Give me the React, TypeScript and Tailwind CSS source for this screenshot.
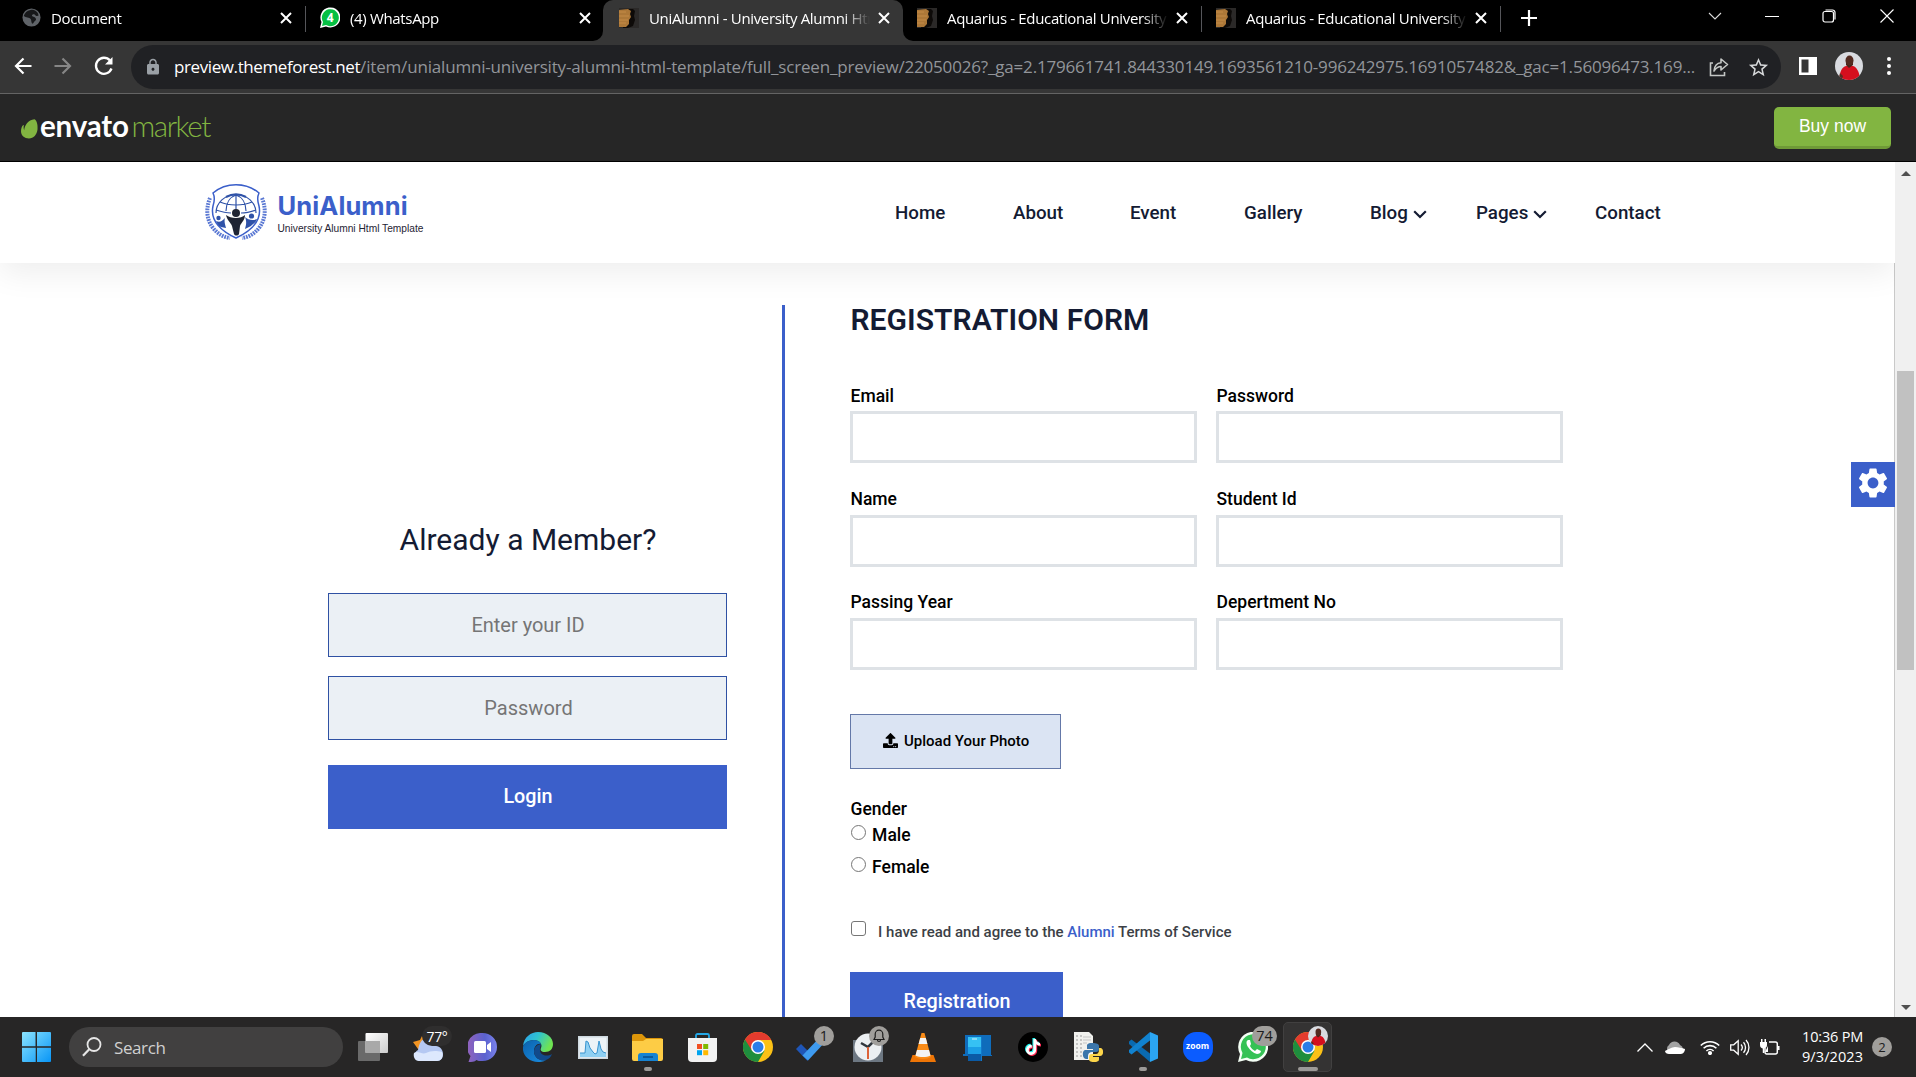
import type { ReactNode } from "react";
import { FaUpload, FaTiktok } from "react-icons/fa";
import { MdSettings, MdLock, MdStarBorder } from "react-icons/md";

const ui = "font-['Open_Sans','Noto_Sans',sans-serif]";

function CloseX() {
  return (
    <svg width="12" height="12" viewBox="0 0 12 12" className="shrink-0" stroke="#fff" strokeWidth="2">
      <path d="M1 1 11 11M11 1 1 11" />
    </svg>
  );
}

function ForestIcon() {
  return (
    <svg width="20" height="20" viewBox="0 0 20 20" className="shrink-0">
      <rect width="20" height="20" fill="#2b2928" />
      <path d="M7 1h7l2 2-1 5 1 4-2 6-5 2H4z" fill="#0d0a08" />
      <path d="M0 2l9-1 3 2-1 3 1 3-2 3v4l-3 3H0z" fill="#ad7838" />
      <path d="M0 4h7M0 8h10M0 12h9M0 15h7" stroke="#c48b46" strokeWidth="1" />
    </svg>
  );
}

function GlobeIcon() {
  return (
    <svg width="19" height="19" viewBox="0 0 20 20" className="shrink-0">
      <circle cx="10" cy="10" r="9.5" fill="#5f6368" />
      <path d="M9 2c4-1 8 2 8.500 6-2 1-3 0-4-1s-3-.5-3 1 3 1 4 3-1 2-2 4-2 2-2.500 0 0-3-1.500-4S2 10 2 8c1-3 3-5.500 7-6z" fill="#17181a" />
    </svg>
  );
}

function WhatsTabIcon() {
  return (
    <svg width="20" height="21" viewBox="0 0 20 21" className="shrink-0">
      <path d="M0 21 1.500 15A10 10 0 1 1 6 19.400z" fill="#fff" />
      <path d="M2 19 3 15A8.500 8.500 0 1 1 6 18z" fill="#06c043" />
      <text x="10.200" y="14.800" textAnchor="middle" fontSize="12" fontWeight="700" fill="#fff" fontFamily="Open Sans">4</text>
    </svg>
  );
}

function Tab({ icon, title, left, wide, iconWidth }: { icon: ReactNode; title: string; left: string; wide?: string; iconWidth?: string }) {
  return (
    <div className={`flex h-[35px] items-center ${left} ${wide ?? "w-[300px]"}`}>
      <span className={`flex shrink-0 items-center ${iconWidth ?? "w-[30px]"}`}>{icon}</span>
      <span className="w-[221px] shrink-0 overflow-hidden whitespace-nowrap text-[15px] leading-5 tracking-[-0.34px] text-white [mask-image:linear-gradient(to_right,#000_195px,transparent_221px)]">
        {title}
      </span>
      <span className="ml-[8px] flex pt-px"><CloseX /></span>
    </div>
  );
}

function TabBar() {
  return (
    <div className="flex h-[41px] bg-[#363636]">
      <div className="flex h-full w-[603px] rounded-br-[10px] bg-black">
        <Tab icon={<GlobeIcon />} title="Document" left="pl-[22px]" wide="w-[305px]" iconWidth="w-[29px]" />
        <span className="mt-[6px] h-[26px] w-px bg-[#55565a]" />
        <Tab icon={<WhatsTabIcon />} title="(4) WhatsApp" left="pl-[14px]" wide="w-[297px]" />
      </div>
      <div className="h-full w-[300px] bg-black">
        <div className="h-full w-full rounded-t-[10px] bg-[#363636]">
          <Tab icon={<ForestIcon />} title="UniAlumni - University Alumni Html" left="pl-[16px]" />
        </div>
      </div>
      <div className="flex h-full flex-1 rounded-bl-[10px] bg-black">
        <Tab icon={<ForestIcon />} title="Aquarius - Educational University" left="pl-[14px]" wide="w-[298px]" />
        <span className="mt-[6px] h-[26px] w-px bg-[#55565a]" />
        <Tab icon={<ForestIcon />} title="Aquarius - Educational University" left="pl-[14px]" wide="w-[298px]" />
        <span className="mt-[6px] h-[26px] w-px bg-[#55565a]" />
        <svg width="16" height="16" viewBox="0 0 16 16" className="ml-[20px] mt-[10px]" stroke="#fff" strokeWidth="2.200">
          <path d="M8 0v16M0 8h16" />
        </svg>
        <div className="ml-auto flex h-[32px] items-center pr-[22px]">
          <svg width="14" height="14" viewBox="0 0 14 14" className="mr-[43px]" fill="none" stroke="#ddd" strokeWidth="1.100"><path d="M1 4l6 6 6-6" /></svg>
          <svg width="14" height="14" viewBox="0 0 14 14" className="mr-[43px]" stroke="#fff"><path d="M0 7.500h14" /></svg>
          <svg width="14" height="14" viewBox="0 0 14 14" className="mr-[44px]" fill="none" stroke="#fff" strokeWidth="1.200"><rect x="1" y="2.500" width="10.500" height="10.500" rx="2" /><path d="M3.500 1h7a2.500 2.500 0 0 1 2.500 2.500v7" /></svg>
          <svg width="14" height="14" viewBox="0 0 14 14" stroke="#fff" strokeWidth="1.100"><path d="M.5.5l13 13M13.500.5l-13 13" /></svg>
        </div>
      </div>
    </div>
  );
}

function Avatar({ size }: { size: number }) {
  return (
    <svg width={size} height={size} viewBox="0 0 28 28" className="rounded-full">
      <rect width="28" height="28" fill="#d9dbe0" />
      <path d="M5 28c-1-8 2-13 6-14h7c4 1 6 6 7 12l-4 2z" fill="#d50f1e" />
      <path d="M11 13l3 3 4-3v-3h-7z" fill="#4a2319" />
      <ellipse cx="14.500" cy="8.500" rx="4" ry="5" fill="#532a20" />
      <path d="M5 21l3 3-1 3-3-2z" fill="#5b2c20" />
    </svg>
  );
}

function Toolbar() {
  return (
    <div className="flex h-[53px] items-center border-b border-[#646464] bg-[#363636]">
      <svg width="18" height="18" viewBox="0 0 18 18" className="ml-[14px] mt-[-2px]" fill="none" stroke="#fff" strokeWidth="2.200"><path d="M17.500 9H2M9.500 1.500 2 9l7.500 7.500" /></svg>
      <svg width="18" height="18" viewBox="0 0 18 18" className="ml-[22px] mt-[-2px]" fill="none" stroke="#868686" strokeWidth="2.200"><path d="M.5 9H16M8.500 1.500 16 9l-7.500 7.500" /></svg>
      <svg width="20" height="20" viewBox="0 0 20 20" className="ml-[22px] mt-[-2px]" fill="none" stroke="#fff" strokeWidth="2.300"><path d="M17.500 12.500A8 8 0 1 1 16 4.500" /><path d="M18.500 1v7.500H11z" fill="#fff" stroke="none" /></svg>
      <div className="ml-[17px] flex h-[44px] w-[1650px] items-center rounded-full bg-[#202124] pl-[13px]">
        <MdLock size={18} color="#9aa0a6" />
        <div className="ml-[12px] w-[1527px] whitespace-nowrap pb-px text-[17px] leading-6">
          <span className="tracking-[-0.4px] text-white">preview.themeforest.net</span>
          <span className="tracking-[-0.175px] text-[#92959a]">
            /item/unialumni-university-alumni-html-template/full_screen_preview/22050026?_ga=2.179661741.844330149.1693561210-996242975.1691057482&amp;_gac=1.56096473.169...
          </span>
        </div>
        <svg width="20" height="20" viewBox="0 0 20 20" className="ml-[8px] shrink-0" fill="none" stroke="#c4c7c5" strokeWidth="1.600">
          <path d="M4 6H1.500v12.500h14V15" />
          <path d="M5 14c.5-5 3-8 7-8.200V2l6.500 5.500L12 13V9.500c-3 0-5 1.500-7 4.500z" strokeLinejoin="round" />
        </svg>
        <MdStarBorder size={23} color="#d6d8da" className="ml-[18px] shrink-0" />
      </div>
      <svg width="18" height="18" viewBox="0 0 18 18" className="ml-[18px] mt-[-2px]"><path d="M0 0h18v18H0zM2.500 2.500v13H9.500v-13z" fill="#fff" fillRule="evenodd" /></svg>
      <span className="ml-[18px] mt-[-2px]"><Avatar size={28} /></span>
      <svg width="4" height="18" viewBox="0 0 4 18" className="ml-[24px] mt-[-2px]" fill="#fff"><circle cx="2" cy="2" r="2" /><circle cx="2" cy="9" r="2" /><circle cx="2" cy="16" r="2" /></svg>
    </div>
  );
}

function EnvatoBar() {
  return (
    <div className="flex h-[68px] items-start justify-between border-b border-black bg-[#262626]">
      <div className="ml-[21px] mt-[15px] flex items-center font-['Lato',sans-serif] text-[29.500px] leading-[34px]">
        <svg width="17" height="20" viewBox="0 0 17 20" className="mt-[6px]" fill="#82b541">
          <path d="M13.500.3c2 1 3.500 5 3 10.200-.5 5-4 9-8.500 9C3.500 19.500 0 16.500 0 12.300 0 9.500.8 7.400 2 6.200c.4-.4.9-.1.8.4-.3 1.800-.2 3.200.4 4.600C3.400 7 7 .8 13.500.3z" />
        </svg>
        <span className="ml-[2px] w-[91.500px] font-bold tracking-[-0.200px] text-white">envato</span>
        <span className="font-light tracking-[-1.450px] text-[#82b541]">market</span>
      </div>
      <div className="mr-[25px] mt-[13px] flex h-[42px] w-[117px] items-center justify-center rounded-[5px] border-b-[3px] border-[#6f9a37] bg-[#82b541] pb-px font-['Liberation_Sans',Arial,sans-serif] text-[17.5px] text-white">
        Buy now
      </div>
    </div>
  );
}

function CrestLogo() {
  return (
    <svg width="62" height="58" viewBox="1 0 62 58" fill="none" className="mt-[-2px]">
      <path d="M6 15C2 25 2 36 9 45c5 6 10 9 17 10" stroke="#5a78d3" strokeWidth="4" strokeDasharray="1.800 0.900" />
      <path d="M58 15c4 10 4 21-3 30-5 6-10 9-17 10" stroke="#5a78d3" strokeWidth="4" strokeDasharray="1.800 0.900" />
      <path d="M9 10C22-1 42-1 55 10c-2 4-2 7 0 13 3 14-6 24-23 32C15 47 6 37 9 23c2-6 2-9 0-13z" fill="#fff" stroke="#3b5fca" strokeWidth="1.500" />
      <g stroke="#2f52a8" strokeWidth="1.200">
        <path d="M12 30a20 18.500 0 0 1 40 0" />
        <path d="M32 12v14M22 28c0-8 4-14 10-16 6 2 10 8 10 16M16 19c9 4 23 4 32 0M12 27c6 2 11 3 15 3M52 27c-6 2-11 3-15 3" />
        <path d="M22 14a20 18 0 0 1 20 0" strokeWidth="2.200" />
      </g>
      <circle cx="32" cy="30" r="4" fill="#1f2433" />
      <path d="M22 32c5 4 15 4 19 0 0 5-4 8-5 11l-1 8c-1 2-4 2-5 0l-2-8c-1-3-5-6-6-11z" fill="#1f2433" />
      <g fill="#2f52a8">
        <circle cx="14.500" cy="35" r="2.200" /><circle cx="47.500" cy="33" r="2.600" />
        <path d="M12 38c4 2 6 0 9-3-1 3 0 6 1 10l-5-1c-1 0-4-3-5-6zM41 34c3 3 8 4 12 2-1 4-5 5-6 7l-6 3c1-4 2-7 0-12z" />
      </g>
    </svg>
  );
}

function Chevron() {
  return <svg width="14" height="9" viewBox="0 0 14 9" className="ml-[5px] mt-[3px]" fill="none" stroke="#141b33" strokeWidth="2.200"><path d="M1.200 1.200 7 7l5.800-5.800" /></svg>;
}

function SiteHeader() {
  const item = "flex shrink-0 items-center";
  return (
    <header className="relative flex h-[101px] shrink-0 items-center bg-white shadow-[0_10px_30px_rgba(0,0,0,0.07)]">
      <div className="ml-[205px] flex items-center">
        <CrestLogo />
        <div className="ml-[10.500px] mt-[3px] w-[617.500px]">
          <div className="font-['Inter',sans-serif] text-[25.500px] font-bold leading-[28px] tracking-[0.1px] text-[#3b5fca]">UniAlumni</div>
          <div className="mt-[2px] font-['Liberation_Sans',sans-serif] text-[10.200px] leading-[14px] text-[#1f2433]">University Alumni Html Template</div>
        </div>
      </div>
      <nav className="flex text-[18.750px] font-medium leading-[24px] text-[#141b33]">
        <span className={`${item} w-[118px]`}>Home</span>
        <span className={`${item} w-[117px]`}>About</span>
        <span className={`${item} w-[114px]`}>Event</span>
        <span className={`${item} w-[126px]`}>Gallery</span>
        <span className={`${item} w-[106px]`}>Blog<Chevron /></span>
        <span className={`${item} w-[119px]`}>Pages<Chevron /></span>
        <span className={item}>Contact</span>
      </nav>
    </header>
  );
}

function LoginPanel() {
  return (
    <section className="flex w-[399px] shrink-0 flex-col pt-[217px] text-center">
      <h2 className="pl-px text-[30px] leading-[36px] text-[#141b33]">Already a Member?</h2>
      <div className="mt-[35px] flex h-[64px] items-center justify-center border border-[#2f51a3] bg-[#ebf0f5] pl-px text-[20px] tracking-[-0.020px] text-[#757575]">Enter your ID</div>
      <div className="mt-[19px] flex h-[64px] items-center justify-center border border-[#2f51a3] bg-[#ebf0f5] pl-[2px] text-[20px] text-[#757575]">Password</div>
      <button className="mt-[25px] h-[64px] bg-[#3b5fca] pl-px text-[19.750px] font-medium text-white">Login</button>
    </section>
  );
}

function Field({ label }: { label: string }) {
  return (
    <div>
      <div className="pl-[0.500px] text-[17.500px] font-medium leading-[22px]">{label}</div>
      <div className="mt-[4.850px] h-[52px] w-[347px] border-[3px] border-[#dee2e6]" />
    </div>
  );
}

function Radio({ label }: { label: string }) {
  return (
    <div className="flex h-[32px] shrink-0 items-center text-[17.500px] font-medium">
      <span className="ml-[0.600px] mt-[-4px] h-[15px] w-[15px] rounded-full border border-[#767676]" />
      <span className="ml-[6.500px]">{label}</span>
    </div>
  );
}

function RegistrationForm() {
  return (
    <section className="ml-[65px] flex w-[713px] flex-col text-black">
      <h2 className="mt-[-3px] shrink-0 pl-[0.500px] text-[30px] font-semibold leading-[36px] tracking-[0.05px] text-[#141b33]">REGISTRATION FORM</h2>
      <div className="mt-[46.550px] grid shrink-0 grid-cols-[347px_347px] gap-x-[19px] gap-y-[24.450px]">
        {["Email", "Password", "Name", "Student Id", "Passing Year", "Depertment No"].map((label) => (
          <Field key={label} label={label} />
        ))}
      </div>
      <button className="mt-[44px] flex h-[55px] w-[211px] shrink-0 items-center border border-[#6478a8] bg-[#dbe4f3] pl-[32px] text-[15px] font-medium">
        <FaUpload size={15} className="mb-[2px]" />
        <span className="ml-[6px] pb-[0.500px]">Upload Your Photo</span>
      </button>
      <div className="mt-[30px] shrink-0 pl-[0.500px] text-[17.500px] font-medium leading-[21px]">Gender</div>
      <div className="mt-[-1px] shrink-0">
        <Radio label="Male" />
        <Radio label="Female" />
      </div>
      <div className="mt-[39px] flex h-[20px] shrink-0 items-center text-[15px] font-medium text-[#3c3f46]">
        <span className="ml-[0.600px] mt-[-6px] h-[15px] w-[15px] rounded-[3px] border border-[#767676]" />
        <span className="ml-[12.500px]">
          I have read and agree to the <span className="text-[#3b5fca]">Alumni</span> Terms of Service
        </span>
      </div>
      <button className="mt-[30px] h-[60px] w-[213px] shrink-0 bg-[#3b5fca] pb-px pl-px text-[19.750px] font-medium text-white">Registration</button>
    </section>
  );
}

function Scrollbar() {
  return (
    <div className="flex w-[21px] shrink-0 flex-col items-center bg-[#f0f0f0]">
      <svg width="10" height="5" viewBox="0 0 10 5" className="mt-[9px]" fill="#505050"><path d="M0 5 5 0l5 5z" /></svg>
      <div className="mt-[195px] h-[299px] w-[17px] bg-[#c1c1c1]" />
      <svg width="10" height="5" viewBox="0 0 10 5" className="mb-[7px] mt-auto" fill="#505050"><path d="M0 0h10L5 5z" /></svg>
    </div>
  );
}

function ChromeIcon() {
  return (
    <svg width="30" height="30" viewBox="0 0 30 30">
      <circle cx="15" cy="15" r="15" fill="#fbc116" />
      <path d="M15 15 2 7.500A15 15 0 0 0 15 30l6.500-11.300z" fill="#1e8e3e" />
      <path d="M15 8H28.200A15 15 0 0 0 2 7.500L9 18.700z" fill="#e33b2e" />
      <circle cx="15" cy="15" r="7" fill="#fff" />
      <circle cx="15" cy="15" r="5.500" fill="#2a7de9" />
    </svg>
  );
}

function Badge({ children, pos }: { children: ReactNode; pos: string }) {
  return (
    <span className={`absolute flex h-[20px] items-center justify-center rounded-full bg-[#a09e9b] text-[14.500px] leading-none text-[#1c1c1c] ${pos}`}>
      {children}
    </span>
  );
}

function Cell({ children, mark }: { children: ReactNode; mark?: string }) {
  return (
    <div className="relative flex h-full w-[55px] shrink-0 items-center justify-center">
      {children}
      {mark && <span className={`absolute bottom-[6px] h-[4px] rounded-full bg-[#9b9997] ${mark}`} />}
    </div>
  );
}

function Taskbar() {
  return (
    <footer className={`flex h-[60px] items-center bg-[#272626] ${ui}`}>
      <svg width="29" height="30" viewBox="0 0 30 30" preserveAspectRatio="none" className="ml-[22px]">
        <defs><linearGradient id="win" x2="1" y2="1"><stop stopColor="#8be4ff" /><stop offset="1" stopColor="#0895f6" /></linearGradient></defs>
        <path d="M0 1a1 1 0 0 1 1-1h13v14.300H0zM15.500 0H29a1 1 0 0 1 1 1v13.300H15.500zM0 15.700h14.200V30H1a1 1 0 0 1-1-1zM15.500 15.700H30V29a1 1 0 0 1-1 1H15.500z" fill="url(#win)" />
      </svg>
      <div className="ml-[18px] flex h-[40px] w-[274px] items-center rounded-full bg-[#414040]">
        <svg width="20" height="20" viewBox="0 0 20 20" className="ml-[13px]" fill="none" stroke="#e6e6e6" strokeWidth="1.800"><circle cx="12" cy="7.500" r="6.500" /><path d="M7.500 12 1 18.800" strokeWidth="2.200" /></svg>
        <span className="ml-[12px] pt-px text-[17px] tracking-[-0.4px] text-[#d0d0d0]">Search</span>
      </div>
      <div className="ml-[2px] flex h-full">
        <Cell>
          <svg width="30" height="28" viewBox="0 0 30 28">
            <defs><linearGradient id="tv" y2="1"><stop stopColor="#fff" /><stop offset="1" stopColor="#ccc" /></linearGradient></defs>
            <rect y="8" width="22" height="20" rx="1" fill="#6a6a6a" /><rect x="7.500" width="22.500" height="20" rx="1" fill="url(#tv)" /><path d="M7.500 8H22v12H7.500z" fill="#a9a9a9" />
          </svg>
        </Cell>
        <Cell>
          <svg width="30" height="28" viewBox="0 0 30 28">
            <path d="M0 9l7-2 2-4 5 5-4 8H5z" fill="#f29422" />
            <path d="M6 28a6 6 0 0 1-1-11C6 10 9 5 14 5s8 5 9 8c4 0 7 4 7 8s-2 7-6 7z" fill="#b5c8f2" />
            <path d="M1 20c4-3 8 2 12 0s9-3 16-1c2 5-1 9-5 9H6c-4 0-6-4-5-8z" fill="#dde8fd" />
          </svg>
          <span className="absolute left-[22px] top-[9px] flex h-[20px] w-[30px] items-center justify-center rounded-full bg-[#2f2e2e] text-[14px] tracking-[-0.300px] text-white">77°</span>
        </Cell>
        <Cell>
          <svg width="29" height="29" viewBox="0 0 29 29">
            <defs><linearGradient id="chat" x2="1"><stop stopColor="#9262bc" /><stop offset=".6" stopColor="#5a62cf" /><stop offset="1" stopColor="#7b83eb" /></linearGradient></defs>
            <path d="M14.500 0a14.500 14 0 0 1 0 28c-3 0-5 0-6-1-2 2-5 2-8 2l2-6A14.500 14 0 0 1 14.500 0z" fill="url(#chat)" />
            <rect x="6" y="8" width="12" height="12" rx="1.500" fill="#fff" /><path d="M19 12l4-3v10l-4-3z" fill="#fff" />
          </svg>
        </Cell>
        <Cell>
          <svg width="30" height="30" viewBox="0 0 30 30">
            <defs>
              <linearGradient id="ed1" x2="1" y2=".4"><stop stopColor="#2b9df0" /><stop offset=".5" stopColor="#2fc3d0" /><stop offset="1" stopColor="#6fe352" /></linearGradient>
              <linearGradient id="ed2" y2="1"><stop stopColor="#0b62ac" /><stop offset="1" stopColor="#1a8ce0" /></linearGradient>
            </defs>
            <path d="M0 14C1 5 8 0 15 0c9 0 15 6 15 12 0 5-3 8-8 8-4 0-5-2-4-4 2-4-2-8-7-8-6 0-10 4-11 6z" fill="url(#ed1)" />
            <path d="M0 15C1 11 5 8 11 8c3 0 6 1 7 4-4-1-7 3-7 7 0 7 6 10 12 9-3 2-6 2-8 2C6 30-1 23 0 15z" fill="url(#ed2)" />
            <path d="M18 12c-5 1-7 4-7 8 1 7 8 10 12 8 3-1 5-3 6-6-5 3-13 2-12-6z" fill="#114a8b" />
          </svg>
        </Cell>
        <Cell>
          <svg width="30" height="23" viewBox="0 0 30 23">
            <rect width="30" height="23" fill="#cfd9e0" /><path d="M1.500 1.500h27v20h-27z" fill="#edf3f7" />
            <path d="M2 17h5l1-12 2 1 2 6 3 4 2 2 2-1 2-12 2 8 2 3 3 1v4H2z" fill="#8fd0f3" /><path d="M2 17h5l1-12 2 1 2 6 3 4 2 2 2-1 2-12 2 8 2 3 3 1" fill="none" stroke="#3a94cf" />
          </svg>
        </Cell>
        <Cell mark="w-[8px]">
          <svg width="31" height="27" viewBox="0 0 31 27">
            <path d="M0 2a2 2 0 0 1 2-2h8l4 4h15a2 2 0 0 1 2 2v8H0z" fill="#dd960a" />
            <path d="M0 7h11l3-2h17v20a2 2 0 0 1-2 2H2a2 2 0 0 1-2-2z" fill="#fdcc45" />
            <path d="M6 27v-5a3 3 0 0 1 3-3h14a3 3 0 0 1 3 3v5z" fill="#1683d3" /><path d="M11 23h10" stroke="#0b5a9d" strokeWidth="2" />
          </svg>
        </Cell>
        <Cell>
          <svg width="29" height="29" viewBox="0 0 29 29">
            <path d="M8 7V2.500A1.500 1.500 0 0 1 9.500 1h10A1.500 1.500 0 0 1 21 2.500V7" fill="none" stroke="#23a7e6" strokeWidth="1.800" />
            <path d="M0 5h29v20a4 4 0 0 1-4 4H4a4 4 0 0 1-4-4z" fill="#f2f2f2" />
            <path d="M9 11h5v5H9z" fill="#f25022" /><path d="M15.200 11h5v5h-5z" fill="#7fba00" /><path d="M9 17.200h5v5H9z" fill="#00a4ef" /><path d="M15.200 17.200h5v5h-5z" fill="#ffb900" />
          </svg>
        </Cell>
        <Cell><ChromeIcon /></Cell>
        <Cell>
          <svg width="30" height="26" viewBox="0 0 30 26" className="mt-[2px] mr-[3px]"><path d="M0 14l5-5 8 8-1.500 9z" fill="#1f56b8" /><path d="M6.500 20.500 25 1l5 5-18 19.500z" fill="#3e9bf0" /></svg>
          <Badge pos="right-[6px] top-[9px] w-[20px]">1</Badge>
        </Cell>
        <Cell>
          <svg width="30" height="29" viewBox="0 0 30 29">
            <path d="M0 7h30v22H0z" fill="#6d7782" /><circle cx="15" cy="14" r="13.500" fill="#eceff2" />
            <path d="M8 10l7 4 6-6" fill="none" stroke="#30363d" strokeWidth="2.500" /><path d="M15 14v12" stroke="#dd6238" strokeWidth="2" />
          </svg>
          <Badge pos="right-[6px] top-[9px] w-[20px]">
            <svg width="12" height="14" viewBox="0 0 12 14" fill="none" stroke="#1c1c1c" strokeWidth="1.200"><path d="M1 10.500 2.200 8V5a3.800 3.800 0 0 1 7.600 0v3l1.200 2.500zM4.500 11a1.500 1.500 0 0 0 3 0" /></svg>
          </Badge>
        </Cell>
        <Cell>
          <svg width="26" height="29" viewBox="0 0 26 29">
            <path d="M2.500 22h21L26 29H0z" fill="#ee7506" /><path d="M11.500 0h3L21 24c-4 2.500-12 2.500-16 0z" fill="#fa8b16" />
            <path d="M10.200 5h5.600l1.600 6H8.600zM7 17h12l1.500 5.500c-4 2-11 2-15 0z" fill="#f3f3f3" />
          </svg>
        </Cell>
        <Cell>
          <svg width="29" height="27" viewBox="0 0 29 27">
            <path d="M2 1h26v20h1v1H0v-2h2z" fill="#0f6cbb" /><path d="M5 3h14v24H5z" fill="#1278c9" />
            <path d="M5 3h13v10H5z" fill="#36c1f3" /><path d="M5 13h13v7H5z" fill="#1b9fe6" /><path d="M5 20h13v7H5z" fill="#0b5ba6" /><path d="M9 5h5" stroke="#d8f4ff" />
          </svg>
        </Cell>
        <Cell>
          <span className="relative h-[30px] w-[30px] rounded-full bg-black">
            <FaTiktok size={16} color="#25f4ee" className="absolute left-[6px] top-[6px]" />
            <FaTiktok size={16} color="#fe2c55" className="absolute left-[8px] top-[8px]" />
            <FaTiktok size={16} color="#fff" className="absolute left-[7px] top-[7px]" />
          </span>
        </Cell>
        <Cell>
          <svg width="30" height="30" viewBox="0 0 30 30">
            <path d="M1 0h15l4 4v24H1z" fill="#f1f1ee" /><path d="M4 3v24M8 3v24" stroke="#999" strokeDasharray="2 2" /><path d="M10 5h8M10 8h8M10 11h4" stroke="#c5c5c5" />
            <path d="M19 11c-5 0-5 2-5 3v3h6v1h-8c-3 0-3 9 1 9h2v-3c0-3 2-4 4-4h4c2 0 3-1 3-3v-3c0-2-2-3-7-3z" fill="#3b76ab" />
            <path d="M21 30c5 0 5-2 5-3v-2h-6v-1h7c4 0 4-7 1-8h-2v2c0 2-1 4-3 4h-4c-2 0-3 1-3 3v2c0 2 1 3 5 3z" fill="#fdd54a" />
          </svg>
        </Cell>
        <Cell mark="w-[8px]">
          <svg width="30" height="30" viewBox="0 0 30 30">
            <path d="M1 9.500 3.500 7.500 22 21.500V30L1 12z" fill="#0a6ab0" /><path d="M1 20.500 3.500 22.500 22 8.500V0L1 18z" fill="#1182cf" /><path d="M22 0l8 3.500v23L22 30z" fill="#2ba5f2" />
          </svg>
        </Cell>
        <Cell><span className="flex h-[30px] w-[30px] items-center justify-center rounded-[13px] bg-[#0b5cff] pb-px text-[8.500px] font-bold text-white">zoom</span></Cell>
        <Cell>
          <svg width="30" height="30" viewBox="0 0 30 30"><path d="M0 30l2-8A15 15 0 1 1 8 28z" fill="#f4fff5" /><path d="M3 27l1.500-6A12.500 12.500 0 1 1 9 25.500z" fill="#35c255" /><path d="M10 8c-2 1-2 4 0 7s5 6 9 7c2 0 4-1 4-3l-4-2-2 2c-2-1-4-3-5-5l1-2-1-4z" fill="#fff" /></svg>
          <Badge pos="right-[3px] top-[9px] w-[25px]">74</Badge>
        </Cell>
        <Cell mark="w-[20px]">
          <span className="flex h-[50px] w-[49px] items-center justify-center rounded-[5px] border border-[#414040] bg-[#343333]"><ChromeIcon /></span>
          <span className="absolute right-[7px] top-[9px]"><Avatar size={20} /></span>
        </Cell>
      </div>
      <div className="ml-auto flex h-full items-center pr-[24px]">
        <svg width="16" height="9" viewBox="0 0 16 9" className="mr-[12px]" fill="none" stroke="#fff" strokeWidth="1.300"><path d="M.5 8.500 8 1l7.500 7.500" /></svg>
        <svg width="20" height="13" viewBox="0 0 20 13" className="mr-[15px]"><path d="M5 12a4.500 4.500 0 0 1-1-8 6 6 0 0 1 11 0 4.500 4.500 0 0 1 1 8z" fill="#a3a3a3" /><path d="M0 10c2-1 7-4 10-4s7 1 10 2c0 2-1.500 5-4 5H4c-2 0-4-1-4-3z" fill="#fff" /></svg>
        <svg width="20" height="15" viewBox="0 0 20 15" className="mr-[10px]" fill="none" stroke="#fff" strokeWidth="1.600"><path d="M.8 5.500a13 13 0 0 1 18.400 0M3.600 8.300a9 9 0 0 1 12.800 0M6.400 11a5.200 5.200 0 0 1 7.200 0" /><circle cx="10" cy="13" r="1.300" fill="#fff" /></svg>
        <svg width="20" height="17" viewBox="0 0 20 17" className="mr-[10px]" fill="none" stroke="#fff" strokeWidth="1.300"><path d="M.7 5.800h3l4.500-4v13.400l-4.500-4h-3zM11 5.500a4.500 4.500 0 0 1 0 6M13.500 3.200a8 8 0 0 1 0 10.600M16 1a11 11 0 0 1 0 15" /></svg>
        <svg width="20" height="16" viewBox="0 0 20 16" className="mr-[22px]" fill="none" stroke="#fff" strokeWidth="1.500"><path d="M9 3h6.500a1.800 1.800 0 0 1 1.800 1.800v8.400A1.800 1.800 0 0 1 15.500 15h-9A1.800 1.800 0 0 1 5 13.200V9M18.800 7v4" /><path d="M0 3h7v3a3 3 0 0 1-7 0zM1 0h1.500v3H1zM4.500 0H6v3H4.500zM5 13h3V7z" fill="#fff" stroke="none" /><path d="M3.500 8v6" /></svg>
        <div className="w-[61px] whitespace-nowrap text-right text-[14.500px] leading-[20px] text-white">
          <div className="tracking-[-0.200px]">10:36 PM</div>
          <div className="tracking-[0.080px]">9/3/2023</div>
        </div>
        <span className="ml-[9px] flex h-[20px] w-[20px] items-center justify-center rounded-full bg-[#a09e9b] text-[13px] leading-none text-[#1c1c1c]">2</span>
      </div>
    </footer>
  );
}

export default function App() {
  return (
    <div className="flex h-[1077px] w-[1916px] flex-col overflow-hidden bg-white">
      <div className={ui}>
        <TabBar />
        <Toolbar />
      </div>
      <EnvatoBar />
      <div className="flex min-h-0 flex-1 font-['Roboto',sans-serif]">
        <div className="relative flex w-[1895px] flex-col overflow-hidden">
          <SiteHeader />
          <main className="flex min-h-0 flex-1 overflow-hidden border-r border-[#c9c9c9] pl-[328px] pt-[42px]">
            <LoginPanel />
            <div className="ml-[55px] w-[3px] shrink-0 self-stretch bg-[#3b5fca]" />
            <RegistrationForm />
          </main>
          <div className="absolute right-0 top-[300px] flex h-[45px] w-[44px] items-center justify-center bg-[#3b5fca] pb-[3px]">
            <MdSettings size={36} color="#fff" />
          </div>
        </div>
        <Scrollbar />
      </div>
      <Taskbar />
    </div>
  );
}
